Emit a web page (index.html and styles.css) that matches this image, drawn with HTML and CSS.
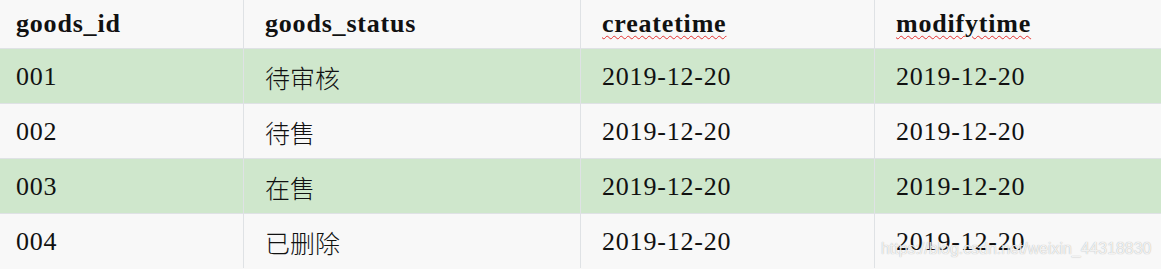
FILE: index.html
```html
<!DOCTYPE html>
<html lang="zh-CN">
<head>
<meta charset="utf-8">
<title>goods table</title>
<link rel="stylesheet" href="styles.css">
</head>
<body>
<div class="table">
  <div class="row head">
    <div class="cell first"><span class="lat b">goods_id</span></div>
    <div class="cell"><span class="lat b">goods_status</span></div>
    <div class="cell"><span class="lat b spell">createtime</span></div>
    <div class="cell last"><span class="lat b spell">modifytime</span></div>
  </div>
  <div class="row green">
    <div class="cell first"><span class="lat">001</span></div>
    <div class="cell"><span class="zh">待审核</span></div>
    <div class="cell"><span class="lat">2019-12-20</span></div>
    <div class="cell last"><span class="lat">2019-12-20</span></div>
  </div>
  <div class="row">
    <div class="cell first"><span class="lat">002</span></div>
    <div class="cell"><span class="zh">待售</span></div>
    <div class="cell"><span class="lat">2019-12-20</span></div>
    <div class="cell last"><span class="lat">2019-12-20</span></div>
  </div>
  <div class="row green">
    <div class="cell first"><span class="lat">003</span></div>
    <div class="cell"><span class="zh">在售</span></div>
    <div class="cell"><span class="lat">2019-12-20</span></div>
    <div class="cell last"><span class="lat">2019-12-20</span></div>
  </div>
  <div class="row lastrow">
    <div class="cell first"><span class="lat">004</span></div>
    <div class="cell"><span class="zh">已删除</span></div>
    <div class="cell"><span class="lat">2019-12-20</span></div>
    <div class="cell last"><span class="lat">2019-12-20</span>
      <span class="watermark">https://blog.csdn.net/weixin_44318830</span>
    </div>
  </div>
</div>
</body>
</html>
```

FILE: styles.css
```css
html, body {
  margin: 0;
  padding: 0;
  background: #f8f8f8;
}
.table {
  width: 1161px;
  height: 269px;
  overflow: hidden;
  color: #111;
}
.row {
  display: grid;
  grid-template-columns: 244px 337px 294px 286px;
  height: 55px;
  background: #f8f8f8;
  border-top: 1px solid #dfe2e5;
  box-sizing: border-box;
}
.row.head {
  height: 48px;
  border-top: none;
}
.row.green {
  background: #cfe7cc;
}
.cell {
  display: flex;
  align-items: center;
  padding-left: 21px;
  border-right: 1px solid #dfe2e5;
  box-sizing: border-box;
  position: relative;
}
.cell.first {
  padding-left: 16px;
}
.cell.last {
  border-right: none;
}
.lat {
  font-family: "Liberation Serif", "Noto Sans CJK SC", serif;
  font-size: 26px;
  letter-spacing: 0.8px;
  line-height: 1;
  padding-top: 2px;
}
.b {
  font-weight: bold;
}
.head .lat {
  padding-top: 0;
}
.zh {
  font-family: "Noto Sans CJK SC", sans-serif;
  font-size: 25px;
  font-weight: 300;
  line-height: 1;
  padding-top: 2px;
}
.spell {
  text-decoration: underline wavy #e53030;
  text-decoration-thickness: 1px;
  text-underline-offset: 3px;
}
.watermark {
  position: absolute;
  left: 6px;
  top: 26px;
  font-family: "Liberation Sans", Arial, sans-serif;
  font-size: 15.9px;
  color: rgba(255, 255, 255, 0.85);
  text-shadow: 0 0 1px rgba(0, 0, 0, 0.35);
  white-space: nowrap;
}
```
